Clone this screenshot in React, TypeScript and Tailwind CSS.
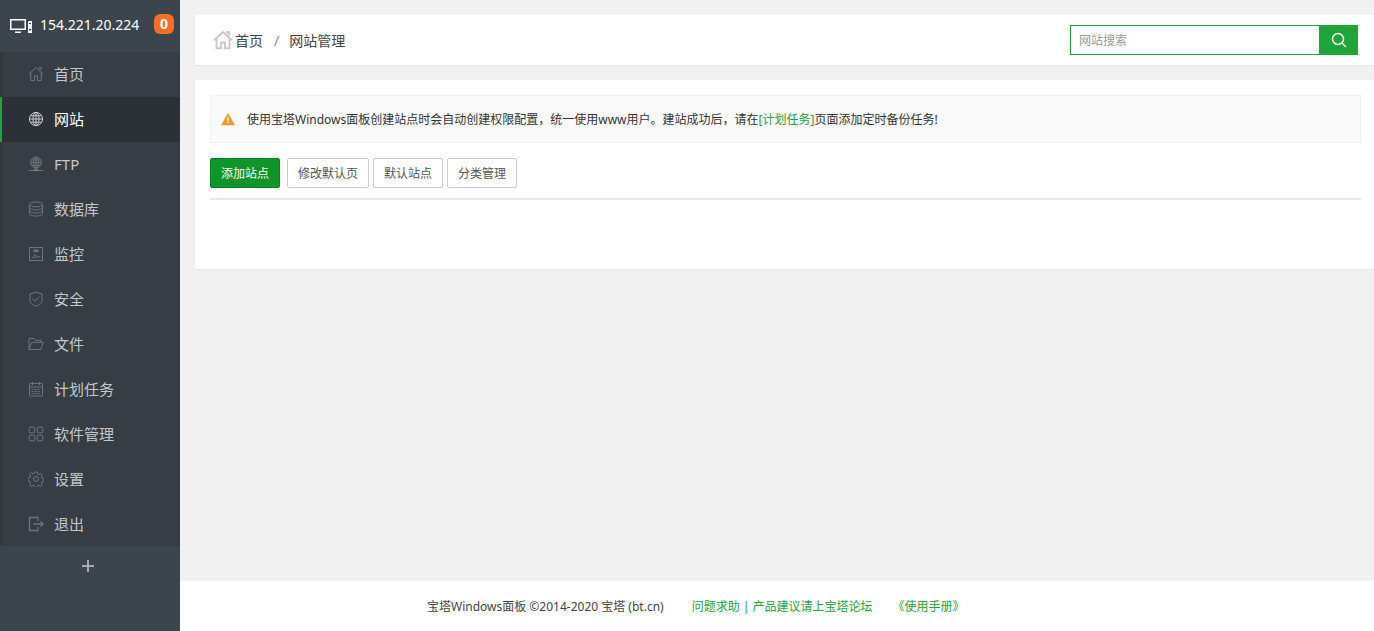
import type { ReactNode } from "react";

const Icon = ({ children, className = "w-4 h-4" }: { children: ReactNode; className?: string }) => (
  <svg viewBox="0 0 16 16" fill="none" stroke="currentColor" strokeWidth="1" className={className}>
    {children}
  </svg>
);

const HomeIcon = ({ className }: { className?: string }) => (
  <Icon className={className}>
    <path d="M.8 8.2 8 1.600l7.200 6.600" />
    <path d="M2.800 7v7.600h3.600V10h3.200v4.600h3.600V7" />
    <path d="M11.500 3V1.600H13v2.800" />
  </Icon>
);

const GlobeIcon = () => (
  <Icon>
    <circle cx="8" cy="8" r="6.600" />
    <ellipse cx="8" cy="8" rx="3" ry="6.600" />
    <path d="M1.400 8h13.200M2.400 4.800h11.200M2.400 11.200h11.200M8 1.400v13.200" />
  </Icon>
);

const FtpIcon = () => (
  <Icon>
    <circle cx="8" cy="6.600" r="5.400" />
    <ellipse cx="8" cy="6.600" rx="2.400" ry="5.400" />
    <path d="M2.600 6.600h10.800M3.400 4h9.200M3.400 9.200h9.200M8 1.200V12" />
    <path d="M.5 14.500h15" />
    <rect x="6" y="12.800" width="4" height="2.400" fill="currentColor" stroke="none" />
  </Icon>
);

const DatabaseIcon = () => (
  <Icon>
    <ellipse cx="8" cy="3.400" rx="6.600" ry="2.400" />
    <path d="M1.400 3.400v9.200c0 1.300 3 2.400 6.600 2.400s6.600-1.100 6.600-2.400V3.400" />
    <path d="M1.400 6.500c0 1.300 3 2.400 6.600 2.400s6.600-1.100 6.600-2.400M1.400 9.600c0 1.300 3 2.400 6.600 2.400s6.600-1.100 6.600-2.400" />
  </Icon>
);

const MonitorIcon = () => (
  <Icon>
    <rect x="1.500" y="1.500" width="13" height="13" />
    <path d="M3.500 11.500H6l1-3 1.500 3.500 1.200-2 .8.800h2" />
    <rect x="5.500" y="3.500" width="5" height="2.500" fill="currentColor" stroke="none" />
  </Icon>
);

const ShieldIcon = () => (
  <Icon>
    <path d="M8 1.200 14 3v6.500c0 2.600-3 4.600-6 5.700-3-1.100-6-3.100-6-5.700V3z" />
    <path d="m4.800 7.800 2.300 2.300 4.200-4.300" />
  </Icon>
);

const FolderIcon = () => (
  <Icon>
    <path d="M1 13.500v-11h5l1.500 1.800H13v2" />
    <path d="M1 13.500h11.800l2.500-7.200H3.500z" />
  </Icon>
);

const CalendarIcon = () => (
  <Icon>
    <rect x="1.500" y="2.500" width="13" height="12.500" rx="1" />
    <path d="M1.500 6h13M4.500 1v3M11.500 1v3" />
    <path d="M3.500 8.500h9M3.500 10.500h9M3.500 12.500h9" strokeDasharray="2 1" />
  </Icon>
);

const AppsIcon = () => (
  <Icon>
    <rect x="1.200" y="1.200" width="5.600" height="5.600" rx="1" />
    <rect x="9.200" y="1.200" width="5.600" height="5.600" rx="1" />
    <rect x="1.200" y="9.200" width="5.600" height="5.600" rx="1" />
    <rect x="9.200" y="9.200" width="5.600" height="5.600" rx="1" />
  </Icon>
);

const GearIcon = () => (
  <Icon>
    <circle cx="8" cy="8" r="2.400" />
    <path d="M6.800 1h2.400l.4 2 1.400.6 1.700-1.100 1.700 1.700-1.100 1.700.6 1.400 2 .4v2.400l-2 .4-.6 1.400 1.100 1.700-1.700 1.700-1.700-1.100-1.400.6-.4 2H6.800l-.4-2-1.400-.6-1.700 1.100-1.700-1.700 1.100-1.700-.6-1.400-2-.4V6.800l2-.4.6-1.400-1.100-1.700 1.700-1.700 1.700 1.100 1.400-.6z" />
  </Icon>
);

const LogoutIcon = () => (
  <Icon>
    <path d="M10 5V1.500H1.500v13H10V11" strokeWidth="1.300" />
    <path d="M5.500 8h10M12.500 5.500 15 8l-2.500 2.500" strokeWidth="1.300" />
  </Icon>
);

const navItems = [
  { label: "首页", icon: <HomeIcon className="w-4 h-4" /> },
  { label: "网站", icon: <GlobeIcon />, active: true },
  { label: "FTP", icon: <FtpIcon /> },
  { label: "数据库", icon: <DatabaseIcon /> },
  { label: "监控", icon: <MonitorIcon /> },
  { label: "安全", icon: <ShieldIcon /> },
  { label: "文件", icon: <FolderIcon /> },
  { label: "计划任务", icon: <CalendarIcon /> },
  { label: "软件管理", icon: <AppsIcon /> },
  { label: "设置", icon: <GearIcon /> },
  { label: "退出", icon: <LogoutIcon /> },
];

const actions = ["修改默认页", "默认站点", "分类管理"];

const Sidebar = () => (
  <aside className="w-45 shrink-0 bg-[#3c444d] flex flex-col">
    <div className="h-13 flex items-center pl-2.5 pr-1.5 pb-1 text-white">
      <svg viewBox="0 0 22 16" className="w-5.5 h-4 shrink-0 mt-1 text-white" fill="currentColor">
        <path d="M0 1h16v11H0zm1.500 1.500v8h13v-8zM5 13.500h6V15H5z" fillRule="evenodd" />
        <path d="M18 3h4v12h-4zm1 2v1h2V5zm0 6v1.500h2V11z" fillRule="evenodd" />
      </svg>
      <span className="ml-2 mt-0.5 text-sm">154.221.20.224</span>
      <span className="ml-auto w-5 h-5 rounded-md bg-[#f96d24] text-sm font-bold flex items-center justify-center">0</span>
    </div>
    <nav className="h-123.5 flex flex-col bg-[#363d44] border-l-2 border-[#31363b]">
      {navItems.map((item) => (
        <div
          key={item.label}
          className={
            item.active
              ? "flex-1 -ml-0.5 pl-6.5 flex items-center gap-2.5 bg-[#2c3138] border-l-2 border-[#20a53a] text-white text-[15px]"
              : "flex-1 -ml-0.5 pl-7 flex items-center gap-2.5 text-[#c3c8cc] text-[15px]"
          }
        >
          <span className={item.active ? "text-[#c9ccd0]" : "text-[#6f757b]"}>{item.icon}</span>
          <span>{item.label}</span>
        </div>
      ))}
    </nav>
    <div className="h-10 flex items-center justify-center pr-1 text-[#a7abb0]">
      <svg viewBox="0 0 14 14" className="w-3.5 h-3.5" fill="none" stroke="currentColor" strokeWidth="2">
        <path d="M7 1v12M1 7h12" />
      </svg>
    </div>
  </aside>
);

export default function App() {
  return (
    <div
      className="h-screen flex overflow-hidden bg-[#f1f1f1] text-xs text-[#333]"
      style={{ fontFamily: '"Noto Sans", "Noto Sans CJK SC", sans-serif' }}
    >
      <Sidebar />
      <main className="flex-1 flex flex-col min-w-0">
        <div className="pl-3.75 pt-3.75 flex flex-col gap-3.75">
          <header className="h-12.5 bg-white shadow-xs flex items-center justify-between pl-4.5 pr-4">
            <div className="flex items-center pt-0.5 text-sm text-[#444]">
              <HomeIcon className="w-5 h-5 text-[#c9c9c9] stroke-[1.5] mr-0.5 -mt-0.5" />
              <span>首页</span>
              <span className="ml-2.75 mr-2.5 text-[#888]">/</span>
              <span>网站管理</span>
            </div>
            <div className="flex h-7.5">
              <input
                placeholder="网站搜索"
                className="w-62.5 border border-[#20a53a] px-2 pt-0.5 text-xs outline-none placeholder:text-[#999]"
              />
              <button className="w-9.5 bg-[#20a53a] text-white flex items-center justify-center">
                <svg viewBox="0 0 16 16" className="w-4 h-4" fill="none" stroke="currentColor" strokeWidth="1.500">
                  <circle cx="7" cy="7" r="5.500" />
                  <path d="m11 11 4 4" />
                </svg>
              </button>
            </div>
          </header>
          <section className="h-47.25 bg-white shadow-xs pt-3.75 pl-3.75 pr-3.25">
            <div className="h-12 flex items-center bg-[#fafafa] border border-[#f0f0f0] pl-2.5">
              <svg viewBox="0 0 16 14" className="w-3.5 h-3.5 mr-3">
                <path d="M8 0 16 14H0z" fill="#f79a1f" />
                <path d="M7.200 5h1.600v4.500H7.200zM7.200 10.500h1.600V12H7.200z" fill="#fff" />
              </svg>
              <span className="pt-0.5">
                使用宝塔Windows面板创建站点时会自动创建权限配置，统一使用www用户。建站成功后，请在
                <span className="text-[#20a53a]">[计划任务]</span>
                页面添加定时备份任务!
              </span>
            </div>
            <div className="mt-3.75 pb-2.5 flex gap-1 border-b-2 border-[#e8e8e8]">
              <button className="h-7.5 px-2.5 pt-0.5 mr-0.75 rounded-xs bg-[#10952a] border border-[#0d7d23] text-white">添加站点</button>
              {actions.map((a) => (
                <button key={a} className="h-7.5 px-2.5 pt-0.5 rounded-xs bg-white border border-[#ccc] text-[#555]">
                  {a}
                </button>
              ))}
            </div>
          </section>
        </div>
        <footer className="mt-auto h-12.5 bg-white flex items-center pl-61.75 pt-0.5 text-[#444]">
          <span>宝塔Windows面板 ©2014-2020 宝塔 (bt.cn)</span>
          <span className="ml-7 text-[#20a53a]">问题求助 | 产品建议请上宝塔论坛</span>
          <span className="ml-5 text-[#20a53a]">《使用手册》</span>
        </footer>
      </main>
    </div>
  );
}
